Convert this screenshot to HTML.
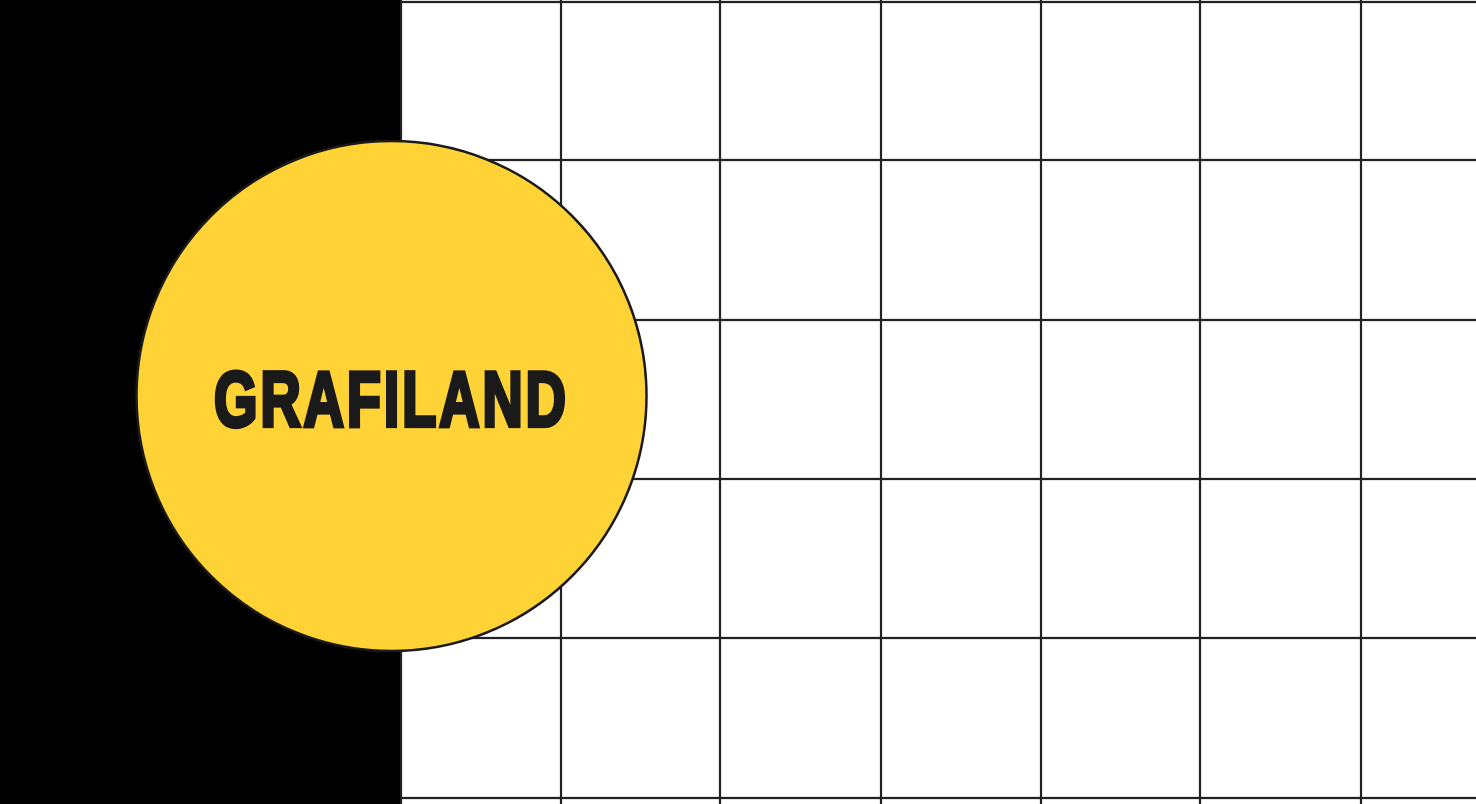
<!DOCTYPE html>
<html><head><meta charset="utf-8"><style>
html,body{margin:0;padding:0;width:1476px;height:804px;overflow:hidden;background:#fff}
</style></head><body>
<svg width="1476" height="804" viewBox="0 0 1476 804" xmlns="http://www.w3.org/2000/svg">
<rect x="0" y="0" width="1476" height="804" fill="#fff"/>
<rect x="0" y="0" width="401" height="804" fill="#000"/>
<g stroke="#222" stroke-width="2.2" fill="none">
<line x1="401" y1="0" x2="401" y2="804"/>
<line x1="561" y1="0" x2="561" y2="804"/>
<line x1="720" y1="0" x2="720" y2="804"/>
<line x1="881" y1="0" x2="881" y2="804"/>
<line x1="1041" y1="0" x2="1041" y2="804"/>
<line x1="1200" y1="0" x2="1200" y2="804"/>
<line x1="1361" y1="0" x2="1361" y2="804"/>
<line x1="401" y1="2" x2="1476" y2="2"/>
<line x1="401" y1="160" x2="1476" y2="160"/>
<line x1="401" y1="320" x2="1476" y2="320"/>
<line x1="401" y1="479" x2="1476" y2="479"/>
<line x1="401" y1="638" x2="1476" y2="638"/>
<line x1="401" y1="798" x2="1476" y2="798"/>
</g>
<circle cx="391.5" cy="396" r="255" fill="#FFD236" stroke="#1a1a1a" stroke-width="2.5"/>
<text x="0" y="0" transform="translate(214,426) scale(1,1.4)" font-family="Liberation Sans, sans-serif" font-weight="bold" font-size="56" fill="#1a1a1a" stroke="#1a1a1a" stroke-width="3" stroke-linejoin="miter" textLength="352" lengthAdjust="spacing">GRAFILAND</text>
</svg>
</body></html>
